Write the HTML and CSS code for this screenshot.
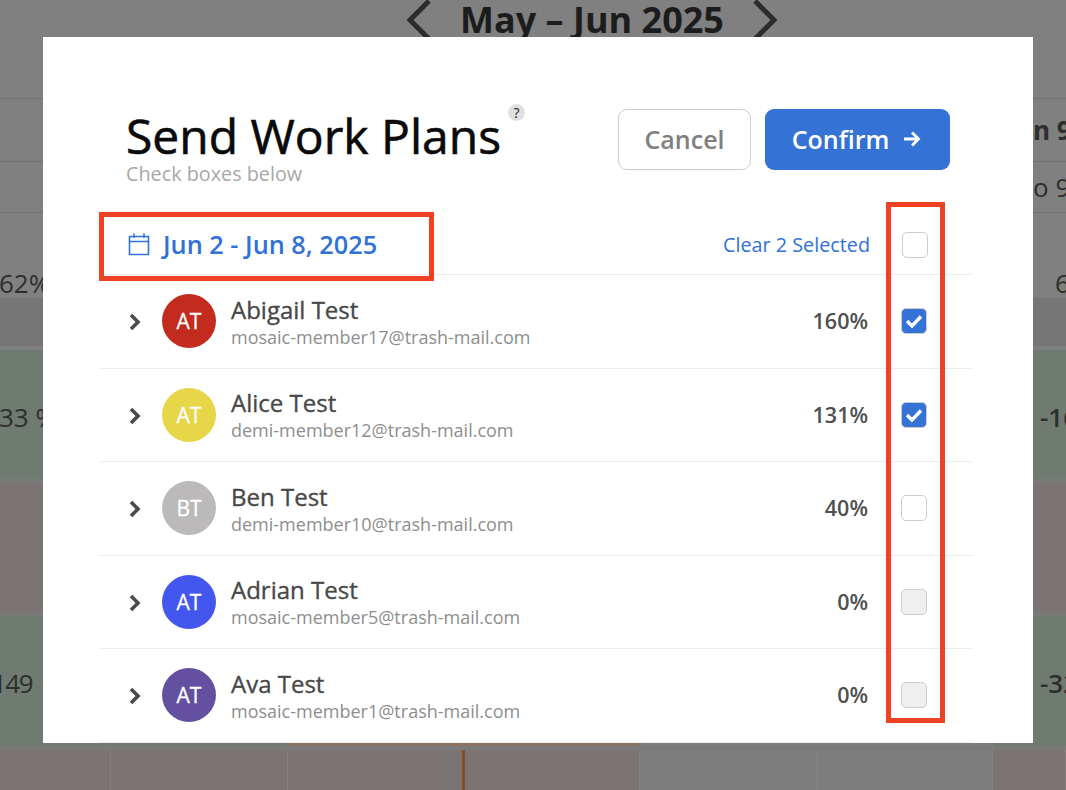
FILE: index.html
```html
<!DOCTYPE html>
<html lang="en">
<head>
    <meta charset="UTF-8">
    <meta name="viewport" content="width=device-width, initial-scale=1.0">
    <title>Send Work Plans</title>
    <link rel="stylesheet" href="styles.css">
</head>
<body>
    <!-- dimmed planner behind the modal -->
    <div class="planner">
        <div class="month">
            <svg class="month-arrow" width="26" height="56" viewBox="0 0 26 56"><path d="M23 3 L4 22 L23 41" fill="none" stroke="#2c2c2c" stroke-width="5"/></svg>
            <span class="month-label">May – Jun 2025</span>
            <svg class="month-arrow" width="26" height="56" viewBox="0 0 26 56"><path d="M3 3 L22 22 L3 41" fill="none" stroke="#2c2c2c" stroke-width="5"/></svg>
        </div>
        <div class="bg-row day-row"><span></span><span></span><span class="edge-right strong">n 9</span></div>
        <div class="bg-row week-row"><span></span><span></span><span class="edge-right">o 9</span></div>
        <div class="bg-row total-row"><span class="edge-left">62%</span><span></span><span class="edge-right far">6</span></div>
        <div class="bg-row dark-row"></div>
        <div class="bg-row green-row"><span class="edge-left">33 %</span><span></span><span class="edge-right minus">-16</span></div>
        <div class="bg-row mauve-row"></div>
        <div class="bg-row green-row last-green"><span class="edge-left nudge">149</span><span></span><span class="edge-right minus">-32</span></div>
        <div class="strip">
            <div class="strip-green"></div>
            <div class="strip-orange"></div>
            <div class="strip-grey"></div>
            <div class="strip-end"></div>
        </div>
        <div class="cells">
            <div class="cell mauve"></div>
            <div class="cell mauve"></div>
            <div class="cell mauve today"></div>
            <div class="cell mauve"></div>
            <div class="cell grey"></div>
            <div class="cell grey"></div>
            <div class="cell mauve"></div>
        </div>
    </div>

    <div class="modal">
        <div class="modal-head">
            <div class="modal-title">
                <h1>Send Work Plans<span class="help">?</span></h1>
                <p>Check boxes below</p>
            </div>
            <div class="modal-actions">
                <button class="btn btn-cancel">Cancel</button>
                <button class="btn btn-confirm">Confirm
                    <svg width="18" height="18" viewBox="0 0 18 18"><path d="M1 9 H15 M9 2.5 L15.5 9 L9 15.5" fill="none" stroke="#fff" stroke-width="2.8"/></svg>
                </button>
            </div>
        </div>

        <div class="list-head">
            <div class="date-range">
                <svg width="22" height="24" viewBox="0 0 22 24"><path d="M1.5 4.5 H20.5 V22.5 H1.5 Z M1.5 9.5 H20.5 M6 1.5 V6 M16 1.5 V6" fill="none" stroke="#3072d8" stroke-width="1.6"/></svg>
                <span>Jun 2 - Jun 8, 2025</span>
            </div>
            <a class="clear-link">Clear 2 Selected</a>
            <span class="check head-check"></span>
        </div>

        <div class="member">
            <svg class="chevron" width="14" height="20" viewBox="0 0 14 20"><path d="M3 3 L10 10 L3 17" fill="none" stroke="#4a4a4a" stroke-width="3.6"/></svg>
            <div class="avatar red">AT</div>
            <div class="member-info">
                <div class="member-name">Abigail Test</div>
                <div class="member-mail">mosaic-member17@trash-mail.com</div>
            </div>
            <div class="member-pct">160%</div>
            <span class="check checked"><svg width="18" height="14" viewBox="0 0 18 14"><path d="M2 7 L7 12 L16 2.5" fill="none" stroke="#fff" stroke-width="3.4"/></svg></span>
        </div>
        <div class="member">
            <svg class="chevron" width="14" height="20" viewBox="0 0 14 20"><path d="M3 3 L10 10 L3 17" fill="none" stroke="#4a4a4a" stroke-width="3.6"/></svg>
            <div class="avatar yellow">AT</div>
            <div class="member-info">
                <div class="member-name">Alice Test</div>
                <div class="member-mail">demi-member12@trash-mail.com</div>
            </div>
            <div class="member-pct">131%</div>
            <span class="check checked"><svg width="18" height="14" viewBox="0 0 18 14"><path d="M2 7 L7 12 L16 2.5" fill="none" stroke="#fff" stroke-width="3.4"/></svg></span>
        </div>
        <div class="member">
            <svg class="chevron" width="14" height="20" viewBox="0 0 14 20"><path d="M3 3 L10 10 L3 17" fill="none" stroke="#4a4a4a" stroke-width="3.6"/></svg>
            <div class="avatar silver">BT</div>
            <div class="member-info">
                <div class="member-name">Ben Test</div>
                <div class="member-mail">demi-member10@trash-mail.com</div>
            </div>
            <div class="member-pct">40%</div>
            <span class="check"></span>
        </div>
        <div class="member">
            <svg class="chevron" width="14" height="20" viewBox="0 0 14 20"><path d="M3 3 L10 10 L3 17" fill="none" stroke="#4a4a4a" stroke-width="3.6"/></svg>
            <div class="avatar blue">AT</div>
            <div class="member-info">
                <div class="member-name">Adrian Test</div>
                <div class="member-mail">mosaic-member5@trash-mail.com</div>
            </div>
            <div class="member-pct">0%</div>
            <span class="check disabled"></span>
        </div>
        <div class="member">
            <svg class="chevron" width="14" height="20" viewBox="0 0 14 20"><path d="M3 3 L10 10 L3 17" fill="none" stroke="#4a4a4a" stroke-width="3.6"/></svg>
            <div class="avatar purple">AT</div>
            <div class="member-info">
                <div class="member-name">Ava Test</div>
                <div class="member-mail">mosaic-member1@trash-mail.com</div>
            </div>
            <div class="member-pct">0%</div>
            <span class="check disabled"></span>
        </div>
    </div>

    <!-- red annotation boxes -->
    <div class="mark mark-date"></div>
    <div class="mark mark-checks"></div>
</body>
</html>
```

FILE: styles.css
```css
html, body {
    margin: 0;
    padding: 0;
    height: 790px;
    overflow: hidden;
}
body {
    font-family: "Open Sans", sans-serif;
    background: #808080;
    color: #4a4a4a;
}

/* planner behind the modal */
.planner {
    display: flex;
    flex-direction: column;
    height: 790px;
    color: #2e2e2e;
}
.month {
    height: 98px;
    display: flex;
    justify-content: center;
    align-items: flex-start;
    gap: 28px;
    padding-left: 118px;
    border-bottom: 1px solid #727272;
    overflow: hidden;
}
.month-label {
    font-size: 36px;
    font-weight: 700;
    line-height: 40px;
    color: #1c1c1c;
}
.month-arrow {
    margin-top: -2px;
}
.bg-row {
    display: grid;
    grid-template-columns: 43px 990px 33px;
    align-items: center;
    font-size: 26px;
    white-space: nowrap;
}
.bg-row span {
    overflow: hidden;
}
.edge-left {
    margin-left: -1px;
}
.edge-left.nudge {
    margin-left: -8px;
    letter-spacing: -1.5px;
}
.edge-right.strong {
    font-weight: 700;
}
.edge-right.far {
    padding-left: 22px;
}
.edge-right.minus {
    font-weight: 600;
    padding-left: 7px;
}
.day-row {
    height: 62px;
    border-bottom: 1px solid #727272;
}
.week-row {
    height: 50px;
    border-bottom: 1px solid #727272;
}
.total-row {
    height: 85px;
    align-items: end;
    line-height: 32px;
}
.total-row span {
    margin-bottom: -1px;
}
.dark-row {
    height: 48px;
    background: #767676;
    border-bottom: 4px solid #7f7f7f;
}
.green-row {
    height: 125px;
    padding-top: 4px;
    background: #6f7a70;
    border-bottom: 4px solid #7a7a7a;
}
.last-green {
    height: 121px;
    padding-top: 6px;
    border-bottom: 0;
}
.mauve-row {
    height: 129px;
    background: #7b7473;
    border-bottom: 4px solid #7a7a7a;
}
.strip {
    height: 7px;
    display: flex;
    background: #7a7a7a;
}
.strip div {
    height: 3px;
}
.strip-green {
    width: 288px;
    background: #6f7a70;
}
.strip-orange {
    width: 352px;
    background: #8a7360;
}
.strip-grey {
    width: 353px;
    background: #7d7d7d;
}
.strip-end {
    flex: 1;
    background: #6f7a70;
}
.cells {
    flex: 1;
    display: grid;
    grid-template-columns: 111px 177px 177px 175px 177px 176px 73px;
}
.cell {
    border-right: 1px solid #848080;
}
.cell.mauve {
    background: #7b7473;
}
.cell.grey {
    background: #7d7d7d;
}
.cell.today {
    border-right: 3px solid #8a4f20;
}

/* modal */
.modal {
    position: absolute;
    left: 43px;
    top: 37px;
    width: 872px;
    height: 706px;
    padding: 0 61px 0 57px;
    background: #fff;
    overflow: hidden;
}
.modal-head {
    display: flex;
    justify-content: space-between;
    padding: 72px 22px 0 26px;
    height: 103px;
}
.modal-title h1 {
    margin: 0;
    font-size: 48px;
    font-weight: 400;
    -webkit-text-stroke: 0.6px #0a0a0a;
    line-height: 53px;
    color: #0a0a0a;
    position: relative;
}
.help {
    position: absolute;
    right: -24px;
    top: -5px;
    width: 17px;
    height: 17px;
    border-radius: 50%;
    background: #e0e0e0;
    font-size: 14px;
    font-weight: 400;
    -webkit-text-stroke: 0;
    line-height: 17px;
    text-align: center;
    color: #222;
}
.modal-title p {
    margin: 0;
    font-size: 19.8px;
    line-height: 24px;
    color: #a8a8a8;
}
.modal-actions {
    display: flex;
    gap: 14px;
}
.btn {
    height: 61px;
    border-radius: 9px;
    font-family: inherit;
    font-size: 25px;
    font-weight: 600;
    padding: 0 0 2px;
}
.btn-cancel {
    width: 133px;
    background: #fff;
    border: 1px solid #ccc;
    color: #808080;
}
.btn-confirm {
    width: 185px;
    background: #3472d5;
    border: 0;
    color: #fff;
    display: flex;
    align-items: center;
    justify-content: center;
    gap: 14px;
    padding-right: 2px;
}
.list-head {
    display: flex;
    align-items: center;
    box-sizing: border-box;
    height: 63px;
    padding-top: 2px;
    border-bottom: 1px solid #ececec;
}
.date-range {
    display: flex;
    align-items: center;
    gap: 13px;
    padding-left: 28px;
    font-size: 25.3px;
    font-weight: 600;
    color: #3072d8;
    flex: 1;
}
.clear-link {
    font-size: 19.8px;
    color: #3072d8;
    margin-right: 32px;
}
.check {
    width: 26px;
    height: 26px;
    box-sizing: border-box;
    border: 1px solid #ccc;
    border-radius: 5px;
    background: #fff;
    margin-right: 45px;
    display: flex;
    align-items: center;
    justify-content: center;
    flex: none;
}
.check.head-check {
    margin-right: 44px;
    margin-top: 1px;
}
.check.checked {
    background: #3472d5;
}
.check.disabled {
    background: #efefef;
}
.member {
    display: flex;
    align-items: center;
    box-sizing: border-box;
    height: 93.5px;
    border-bottom: 1px solid #ececec;
    padding-left: 28px;
}
.chevron {
    flex: none;
    margin-top: 2px;
}
.avatar {
    width: 54px;
    height: 54px;
    border-radius: 50%;
    margin-left: 20px;
    flex: none;
    display: flex;
    align-items: center;
    justify-content: center;
    color: #fff;
    font-size: 21px;
    -webkit-text-stroke: 0.3px #fff;
}
.red { background: #c32b1e; }
.yellow { background: #e6d648; }
.silver { background: #bbb9b9; }
.blue { background: #4357ee; }
.purple { background: #6450a0; }
.member-info {
    flex: 1;
    margin-left: 15px;
    margin-top: 2px;
}
.member-name {
    font-size: 24px;
    -webkit-text-stroke: 0.35px #484848;
    line-height: 30px;
    color: #484848;
}
.member-mail {
    font-size: 18px;
    line-height: 25px;
    color: #8e8e8e;
}
.member-pct {
    font-size: 21.5px;
    font-weight: 600;
    color: #4f4f4f;
    margin-right: 33px;
    margin-bottom: 1px;
}

/* annotations */
.mark {
    position: absolute;
    box-sizing: border-box;
    border: 5px solid #ee4223;
}
.mark-date {
    left: 99px;
    top: 212px;
    width: 335px;
    height: 69px;
}
.mark-checks {
    left: 886px;
    top: 202px;
    width: 59px;
    height: 521px;
}
```
